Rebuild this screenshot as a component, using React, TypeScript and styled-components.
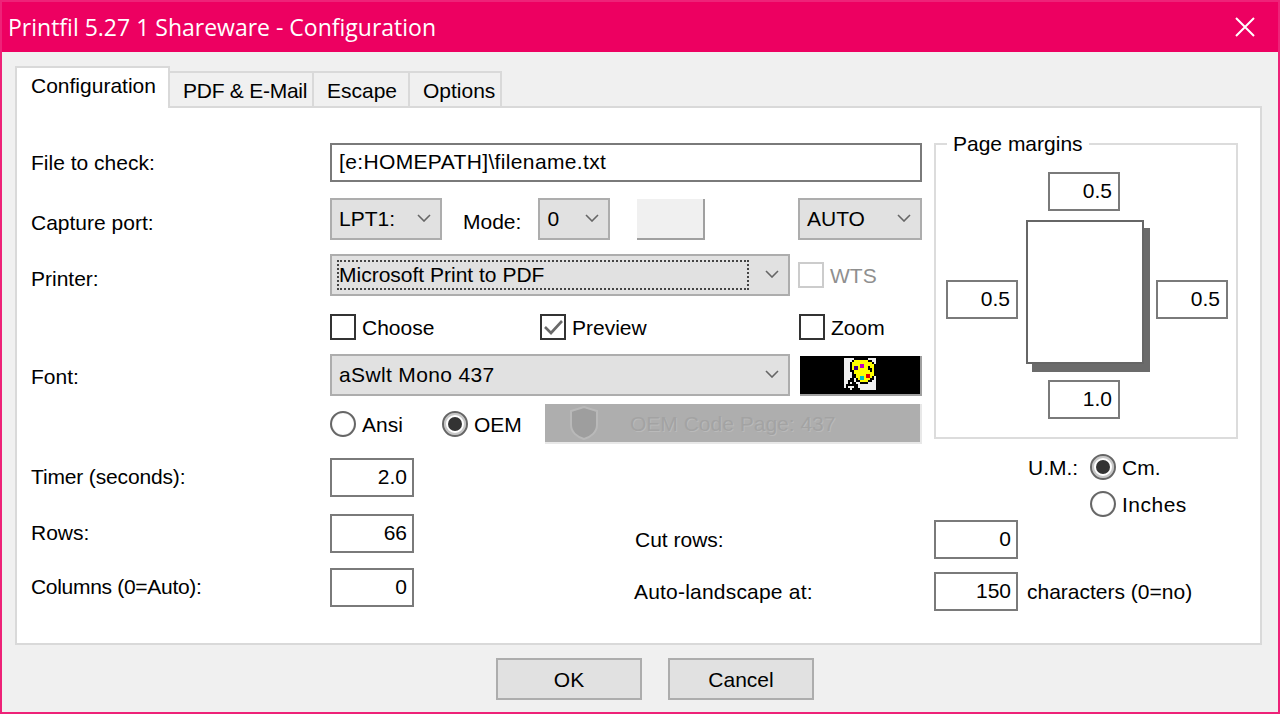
import styled, { createGlobalStyle } from 'styled-components';

const GlobalStyle = createGlobalStyle`
  * {
    box-sizing: border-box;
  }

  html,
  body {
    margin: 0;
    background: #f0f0f0;
  }
`;

const Window = styled.div`
  width: 1280px;
  height: 714px;
  display: flex;
  flex-direction: column;
  overflow: hidden;
  border: 2px solid #ee2278;
  font-family: 'Liberation Sans', Arial, sans-serif;
  font-size: 21px;
  line-height: 1;
  color: #000;
`;

const TitleBar = styled.div`
  height: 50px;
  flex: none;
  display: flex;
  align-items: center;
  justify-content: space-between;
  padding: 0 23px 0 6px;
  background: #ed0061;
  color: #fff;
  font-family: 'Open Sans', sans-serif;
  font-size: 23px;
`;

const Body = styled.div`
  flex: 1;
  display: flex;
  flex-direction: column;
  padding: 14px 16px 12px 13px;
  background: #f0f0f0;
`;

const TabStrip = styled.div`
  position: relative;
  z-index: 1;
  height: 42px;
  flex: none;
  display: flex;
  margin-bottom: -2px;
`;

const Tab = styled.div<{ $width: number }>`
  width: ${({ $width }) => $width}px;
  height: 35px;
  margin-top: 5px;
  padding: 1px 0 0 13px;
  display: flex;
  align-items: center;
  background: #f0f0f0;
  border-top: 2px solid #d9d9d9;
  border-right: 2px solid #d9d9d9;
`;

const ActiveTab = styled.div`
  width: 155px;
  height: 42px;
  padding: 0 0 5px 14px;
  display: flex;
  align-items: center;
  background: #fff;
  border: 2px solid #d9d9d9;
  border-bottom: none;
`;

const Panel = styled.div`
  height: 539px;
  flex: none;
  padding: 35px 0 0 14px;
  background: #fff;
  border: 2px solid #d9d9d9;
`;

const TopSection = styled.div`
  display: flex;
  gap: 12px;
  height: 301px;
`;

const FormColumn = styled.div`
  width: 891px;
  display: flex;
  flex-direction: column;
`;

const FormRow = styled.div<{ $top?: number; $height: number }>`
  display: flex;
  align-items: center;
  flex: none;
  height: ${({ $height }) => $height}px;
  margin-top: ${({ $top }) => $top ?? 0}px;
`;

const RowLabel = styled.div<{ $nudge?: number; $width?: number; $indent?: number }>`
  width: ${({ $width }) => $width ?? 299}px;
  flex: none;
  margin-top: ${({ $nudge }) => ($nudge ?? 0) * 2}px;
  padding-left: ${({ $indent }) => $indent ?? 0}px;
  white-space: nowrap;
`;

const Tracked = styled.span<{ $by: number }>`
  letter-spacing: ${({ $by }) => $by}px;
`;

const TextBox = styled.div<{ $width?: number }>`
  width: ${({ $width }) => ($width ? `${$width}px` : '100%')};
  height: 39px;
  flex: none;
  display: flex;
  align-items: center;
  padding: 0 7px 2px;
  background: #fff;
  border: 2px solid #7a7a7a;
  white-space: nowrap;
`;

const NumberBox = styled(TextBox)`
  justify-content: flex-end;
  padding: 0 5px 2px 0;
`;

const MarginBox = styled(NumberBox)`
  width: 72px;
  padding-right: 6px;
`;

const Select = styled.div<{ $width: number; $left?: number }>`
  width: ${({ $width }) => $width}px;
  height: 42px;
  flex: none;
  display: flex;
  align-items: center;
  justify-content: space-between;
  margin-left: ${({ $left }) => $left ?? 0}px;
  padding: 0 9px 2px 7px;
  background: #e1e1e1;
  border: 2px solid #adadad;
  white-space: nowrap;
`;

const FocusRing = styled.div`
  width: 412px;
  height: 30px;
  margin: 2px 0 0 -2px;
  display: flex;
  align-items: center;
  padding-bottom: 2px;
  border: 2px dotted #444;
`;

const Chevron = styled.svg`
  width: 14px;
  height: 8px;
  flex: none;
  fill: none;
  stroke: #666;
  stroke-width: 1.6;
`;

const InlineLabel = styled.div<{ $left: number }>`
  margin-left: ${({ $left }) => $left}px;
  padding-top: 4px;
`;

const BlankButton = styled.div`
  width: 68px;
  height: 41px;
  margin-left: 27px;
  background: #f0f0f0;
  border-right: 2px solid #a0a0a0;
  border-bottom: 2px solid #a0a0a0;
`;

const CheckItem = styled.div<{ $width?: number; $left?: number; $disabled?: boolean }>`
  width: ${({ $width }) => ($width ? `${$width}px` : 'auto')};
  flex: none;
  display: flex;
  align-items: center;
  gap: 6px;
  margin-left: ${({ $left }) => $left ?? 0}px;
  color: ${({ $disabled }) => ($disabled ? '#8f8f8f' : '#000')};
  white-space: nowrap;
`;

const CheckBox = styled.div<{ $disabled?: boolean }>`
  width: 26px;
  height: 26px;
  flex: none;
  background: #fff;
  border: 2px solid ${({ $disabled }) => ($disabled ? '#cccccc' : '#333')};
`;

const CheckMark = styled.svg`
  display: block;
  width: 22px;
  height: 22px;
  fill: none;
  stroke: #6a6a6a;
  stroke-width: 2.6;
`;

const RadioItem = styled.div<{ $width?: number }>`
  width: ${({ $width }) => ($width ? `${$width}px` : 'auto')};
  flex: none;
  display: flex;
  align-items: center;
  gap: 6px;
  white-space: nowrap;
`;

const RadioCircle = styled.div<{ $checked?: boolean }>`
  width: 26px;
  height: 26px;
  flex: none;
  display: flex;
  align-items: center;
  justify-content: center;
  background: #fff;
  border: 2px solid #666;
  border-radius: 50%;
  box-shadow: ${({ $checked }) => ($checked ? 'inset 0 0 0 2px #c8c8c8' : 'inset 0 0 1px #bbb')};

  &::after {
    content: '';
    display: ${({ $checked }) => ($checked ? 'block' : 'none')};
    width: 14px;
    height: 14px;
    border-radius: 50%;
    background: #333;
  }
`;

const ColorButton = styled.div`
  width: 122px;
  height: 40px;
  margin: 2px 0 0 10px;
  flex: none;
  display: flex;
  align-items: flex-start;
  justify-content: center;
  padding: 2px 0 0;
  background: #000;
  border-right: 2px solid #a0a0a0;
  border-bottom: 2px solid #a0a0a0;
`;

const CodePageButton = styled.div`
  width: 377px;
  height: 40px;
  flex: none;
  display: flex;
  align-items: center;
  padding: 0 0 0 24px;
  background: #aeaeae;
  border-right: 2px solid #e8e8e8;
  border-bottom: 2px solid #e8e8e8;
  color: #a3a3a3;
  text-shadow: 1px 1px 0 #bababa;
  white-space: nowrap;
`;

const ShieldIcon = styled.svg`
  width: 30px;
  height: 34px;
  flex: none;
  margin-right: 31px;
`;

const MarginsGroup = styled.div`
  position: relative;
  width: 304px;
  height: 296px;
  flex: none;
  padding: 27px 0 0 10px;
  border: 2px solid #dcdcdc;
`;

const GroupLegend = styled.div`
  position: absolute;
  top: -12px;
  left: 11px;
  padding: 0 6px;
  background: #fff;
`;

const MarginsGrid = styled.div`
  display: grid;
  grid-template-columns: 72px 138px 72px;
  grid-template-rows: 40px 168px 40px;
`;

const TopMargin = styled.div`
  grid-column: 2;
  grid-row: 1;
  margin-left: 30px;
`;

const SideMargin = styled.div<{ $column: number }>`
  grid-column: ${({ $column }) => $column};
  grid-row: 2;
  padding-top: 68px;
`;

const BottomMargin = styled.div`
  grid-column: 2;
  grid-row: 3;
  margin-left: 30px;
`;

const PageCell = styled.div`
  grid-column: 2;
  grid-row: 2;
  padding: 8px 0 0 8px;
`;

const PagePreview = styled.div`
  width: 118px;
  height: 144px;
  background: #fff;
  border: 2px solid #666;
  box-shadow: 6px 8px 0 #6b6b6b;
`;

const LowerSection = styled.div`
  display: flex;
  margin-top: 10px;
`;

const LeftFields = styled.div`
  width: 603px;
  flex: none;
  padding-top: 4px;
  display: flex;
  flex-direction: column;
`;

const RightFields = styled.div`
  display: flex;
  flex-direction: column;
`;

const UnitsGrid = styled.div`
  margin-left: 394px;
  display: grid;
  grid-template-columns: 62px auto;
  grid-template-rows: 26px 26px;
  row-gap: 11px;
  align-items: center;
`;

const UnitsOption = styled(RadioItem)`
  grid-column: 2;
`;

const Suffix = styled.div`
  margin-left: 9px;
  white-space: nowrap;
`;

const Footer = styled.div`
  display: flex;
  gap: 26px;
  padding: 13px 0 0 481px;
`;

const DialogButton = styled.div`
  width: 146px;
  height: 42px;
  display: flex;
  align-items: center;
  justify-content: center;
  background: #e1e1e1;
  border: 2px solid #adadad;
`;

const CloseIcon = styled.svg`
  display: block;
  width: 20px;
  height: 20px;
  stroke: #fff;
  stroke-width: 2;
`;

const DownArrow = () => (
  <Chevron viewBox="0 0 14 8">
    <path d="M1 1l6 6 6-6" />
  </Chevron>
);

const PALETTE_COLORS: Record<string, string> = {
  k: '#000000',
  y: '#ffff00',
  m: '#c000c0',
  b: '#400080',
  c: '#00c0c0',
  r: '#e00000',
};

const PALETTE_PIXELS = [
  '.....kkkkkkk....',
  '....kyyyyyyykk..',
  '...kyyyyyyyyyyk.',
  '...kyyyymmyyyyyk',
  '...kybbymmyykyyk',
  '...kybbyyyyykkyk',
  '...kkyyyyyyyykyk',
  '....kyyyyyyyyyyk',
  '....kkyyyyyrryyk',
  '....kkyyccyrryk.',
  '...kk.kyccyyykk.',
  '..kkk.kkyyyykk..',
  '..k.kk..kkkk....',
  '.kkkkkk.........',
  '.k...kk.........',
  'kkk.kkkk........',
];

const PaletteIcon = () => (
  <svg width="32" height="32" viewBox="0 0 16 16" shapeRendering="crispEdges">
    <rect width="16" height="16" fill="#f0f0f0" />
    {PALETTE_PIXELS.map((row, y) =>
      row.split('').map((cell, x) =>
        cell === '.' ? null : (
          <rect key={`${x}-${y}`} x={x} y={y} width="1" height="1" fill={PALETTE_COLORS[cell]} />
        ),
      ),
    )}
  </svg>
);

export default function App() {
  return (
    <>
      <GlobalStyle />
      <Window>
        <TitleBar>
          <span>Printfil 5.27 1 Shareware - Configuration</span>
          <CloseIcon viewBox="0 0 20 20">
            <path d="M1 1l18 18M19 1L1 19" />
          </CloseIcon>
        </TitleBar>
        <Body>
          <TabStrip>
            <ActiveTab>Configuration</ActiveTab>
            <Tab $width={144}>
              <Tracked $by={-0.25}>PDF &amp; E-Mail</Tracked>
            </Tab>
            <Tab $width={96}>Escape</Tab>
            <Tab $width={92}>Options</Tab>
          </TabStrip>
          <Panel>
            <TopSection>
              <FormColumn>
                <FormRow $height={39}>
                  <RowLabel>File to check:</RowLabel>
                  <TextBox $width={592}>
                    <Tracked $by={0.36}>[e:HOMEPATH]\filename.txt</Tracked>
                  </TextBox>
                </FormRow>
                <FormRow $top={16} $height={42}>
                  <RowLabel $nudge={3}>Capture port:</RowLabel>
                  <Select $width={112}>
                    LPT1:
                    <DownArrow />
                  </Select>
                  <InlineLabel $left={21}>Mode:</InlineLabel>
                  <Select $width={72} $left={17}>
                    0
                    <DownArrow />
                  </Select>
                  <BlankButton />
                  <Select $width={124} $left={93}>
                    AUTO
                    <DownArrow />
                  </Select>
                </FormRow>
                <FormRow $top={14} $height={42}>
                  <RowLabel $nudge={3}>Printer:</RowLabel>
                  <Select $width={460}>
                    <FocusRing>Microsoft Print to PDF</FocusRing>
                    <DownArrow />
                  </Select>
                  <CheckItem $left={8} $disabled>
                    <CheckBox $disabled />
                    WTS
                  </CheckItem>
                </FormRow>
                <FormRow $top={18} $height={26}>
                  <RowLabel />
                  <CheckItem $width={210}>
                    <CheckBox />
                    Choose
                  </CheckItem>
                  <CheckItem $width={259}>
                    <CheckBox>
                      <CheckMark viewBox="0 0 22 22">
                        <path d="M3 11l6 6L20 5" />
                      </CheckMark>
                    </CheckBox>
                    Preview
                  </CheckItem>
                  <CheckItem>
                    <CheckBox />
                    Zoom
                  </CheckItem>
                </FormRow>
                <FormRow $top={14} $height={42}>
                  <RowLabel $nudge={1}>Font:</RowLabel>
                  <Select $width={460}>
                    <Tracked $by={0.35}>aSwlt Mono 437</Tracked>
                    <DownArrow />
                  </Select>
                  <ColorButton>
                    <PaletteIcon />
                  </ColorButton>
                </FormRow>
                <FormRow $top={8} $height={40}>
                  <RowLabel />
                  <RadioItem $width={112}>
                    <RadioCircle />
                    Ansi
                  </RadioItem>
                  <RadioItem $width={103}>
                    <RadioCircle $checked />
                    OEM
                  </RadioItem>
                  <CodePageButton>
                    <ShieldIcon viewBox="0 0 30 34">
                      <path d="M15 1l13 4v14c0 7-6 12-13 14C8 31 2 26 2 19V5z" fill="#9e9e9e" stroke="#b9b9b9" strokeWidth="2" />
                    </ShieldIcon>
                    OEM Code Page: 437
                  </CodePageButton>
                </FormRow>
              </FormColumn>
              <MarginsGroup>
                <GroupLegend>Page margins</GroupLegend>
                <MarginsGrid>
                  <TopMargin>
                    <MarginBox>0.5</MarginBox>
                  </TopMargin>
                  <SideMargin $column={1}>
                    <MarginBox>0.5</MarginBox>
                  </SideMargin>
                  <PageCell>
                    <PagePreview />
                  </PageCell>
                  <SideMargin $column={3}>
                    <MarginBox>0.5</MarginBox>
                  </SideMargin>
                  <BottomMargin>
                    <MarginBox>1.0</MarginBox>
                  </BottomMargin>
                </MarginsGrid>
              </MarginsGroup>
            </TopSection>
            <LowerSection>
              <LeftFields>
                <FormRow $height={39}>
                  <RowLabel $nudge={-1}>
                    <Tracked $by={-0.15}>Timer (seconds):</Tracked>
                  </RowLabel>
                  <NumberBox $width={84}>2.0</NumberBox>
                </FormRow>
                <FormRow $top={17} $height={39}>
                  <RowLabel $nudge={-1}>Rows:</RowLabel>
                  <NumberBox $width={84}>66</NumberBox>
                </FormRow>
                <FormRow $top={15} $height={39}>
                  <RowLabel $nudge={-1}>
                    <Tracked $by={-0.3}>Columns (0=Auto):</Tracked>
                  </RowLabel>
                  <NumberBox $width={84}>0</NumberBox>
                </FormRow>
              </LeftFields>
              <RightFields>
                <UnitsGrid>
                  <div>U.M.:</div>
                  <RadioItem>
                    <RadioCircle $checked />
                    Cm.
                  </RadioItem>
                  <UnitsOption>
                    <RadioCircle />
                    <Tracked $by={0.5}>Inches</Tracked>
                  </UnitsOption>
                </UnitsGrid>
                <FormRow $top={3} $height={39}>
                  <RowLabel $width={300} $indent={1}>
                    Cut rows:
                  </RowLabel>
                  <NumberBox $width={84}>0</NumberBox>
                </FormRow>
                <FormRow $top={13} $height={39}>
                  <RowLabel $width={300}>
                    <Tracked $by={0.2}>Auto-landscape at:</Tracked>
                  </RowLabel>
                  <NumberBox $width={84}>150</NumberBox>
                  <Suffix>characters (0=no)</Suffix>
                </FormRow>
              </RightFields>
            </LowerSection>
          </Panel>
          <Footer>
            <DialogButton>OK</DialogButton>
            <DialogButton>Cancel</DialogButton>
          </Footer>
        </Body>
      </Window>
    </>
  );
}
